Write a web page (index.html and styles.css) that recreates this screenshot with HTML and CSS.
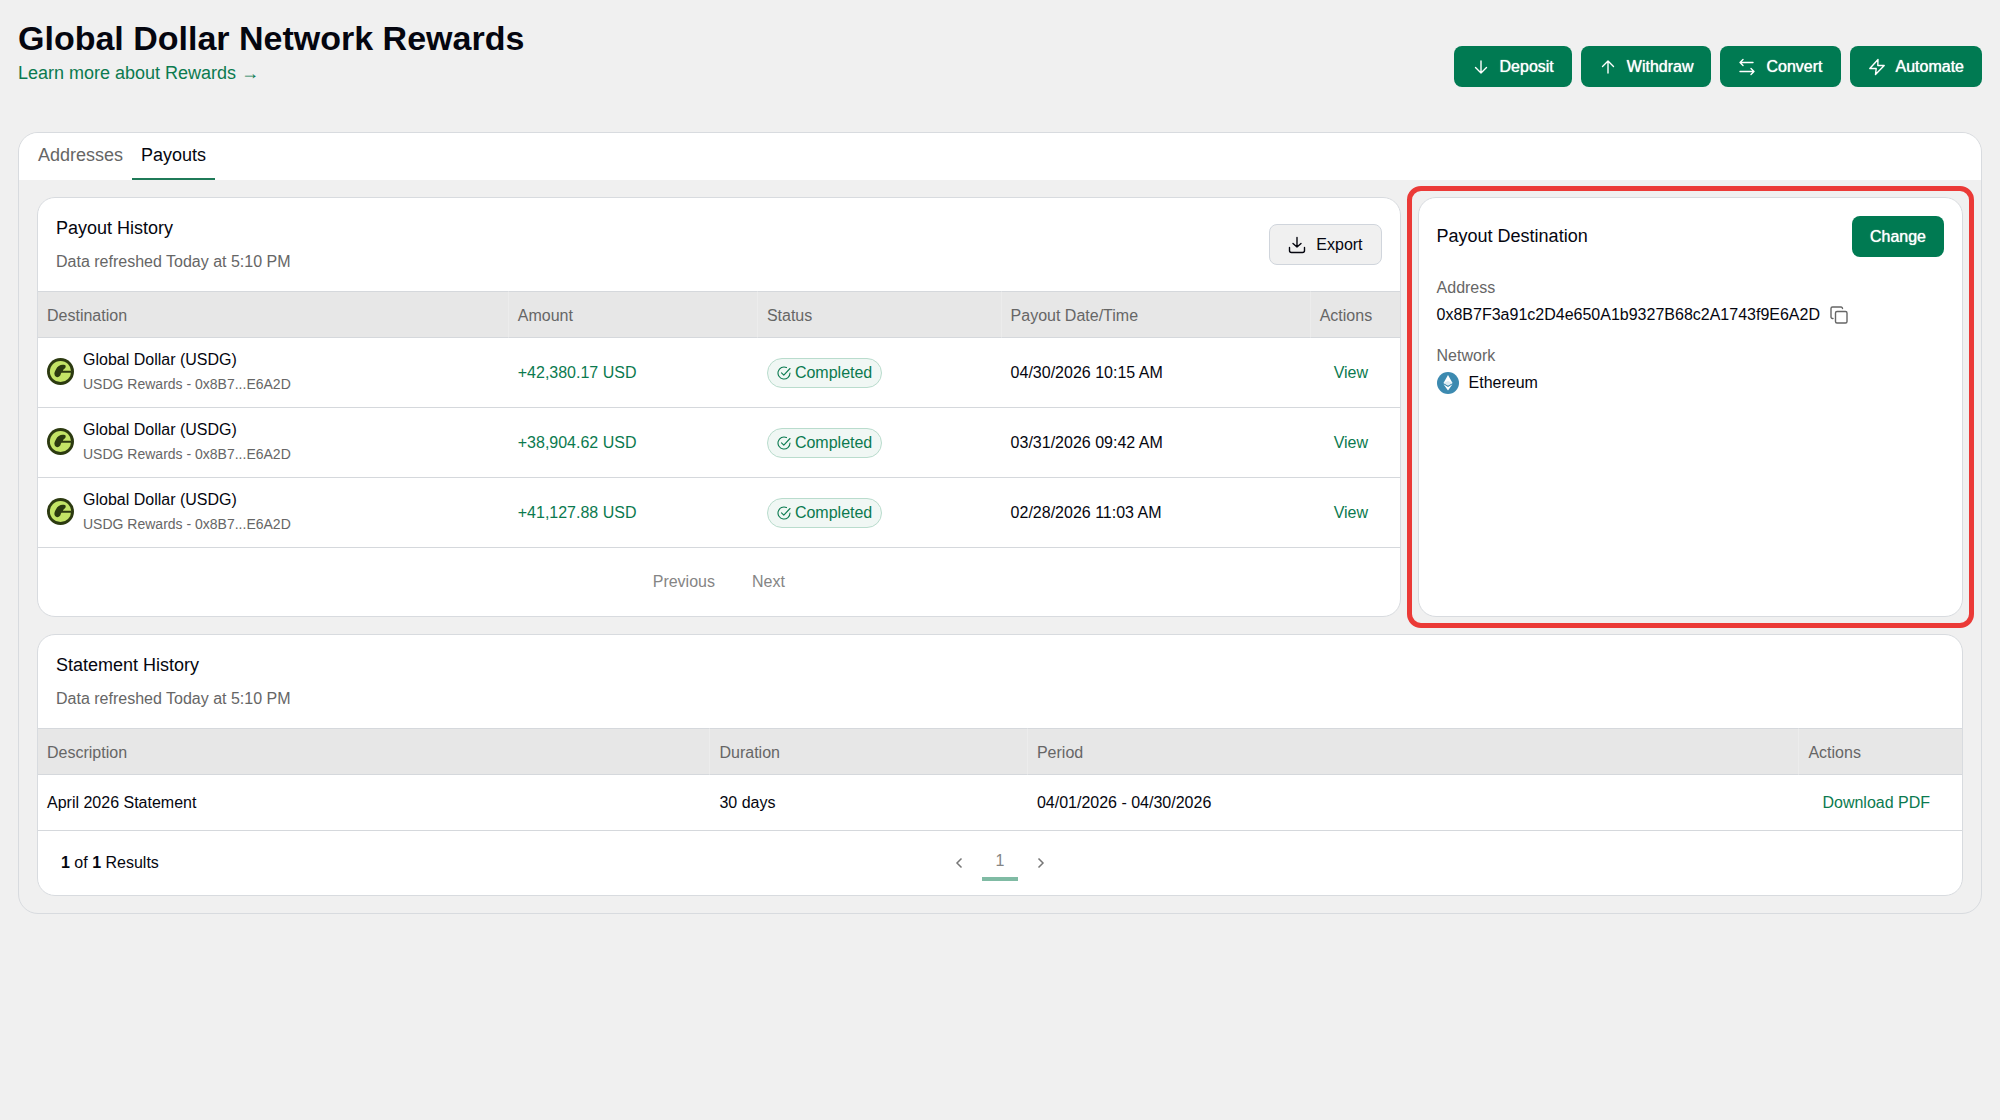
FILE: index.html
```html
<!doctype html>
<html lang="en">
  <head>
    <meta charset="UTF-8" />
    <meta name="viewport" content="width=device-width, initial-scale=1.0" />
    <title>Global Dollar Network Rewards</title>
    <link rel="stylesheet" href="styles.css">
  </head>
  <body>
    <!-- shared icons -->
    <svg class="sprite" aria-hidden="true">
      <symbol id="usdg" viewBox="0 0 28 28">
        <circle cx="14" cy="14" r="14" fill="#2c3a10" />
        <circle cx="14" cy="14" r="11" fill="#c3e466" />
        <path
          d="M19 7.5c-4-1.5-8 .5-9.5 4C8.5 13.500 7 15.5 8 18c.8 2.3 4 2.5 5.5.5 1-1.4.5-2.500 1.500-3.300H25v-2H16.500c.2-1.300 1.800-1.800 2.500-3 .5-1 .5-2 0-2.700z"
          fill="#2c3a10"
        />
      </symbol>
      <symbol id="check" viewBox="0 0 14 14">
        <path
          d="M9.500 1.600A6 6 0 1 0 13 7M4.500 6.800l2.300 2.300L13 2.500"
          fill="none"
          stroke="currentColor"
          stroke-width="1.1"
          stroke-linecap="round"
          stroke-linejoin="round"
        />
      </symbol>
    </svg>

    <header class="page-header">
      <div>
        <h1>Global Dollar Network Rewards</h1>
        <a class="learn-more" href="#">Learn more about Rewards →</a>
      </div>
      <div class="actions">
        <button class="btn btn-primary" type="button">
          <svg class="icon" viewBox="0 0 18 18"><path d="M9 3v12M3.500 9.500L9 15l5.500-5.500" /></svg>
          Deposit
        </button>
        <button class="btn btn-primary" type="button">
          <svg class="icon" viewBox="0 0 18 18"><path d="M9 15V3M3.500 8.500L9 3l5.500 5.500" /></svg>
          Withdraw
        </button>
        <button class="btn btn-primary" type="button">
          <svg class="icon" viewBox="0 0 18 18">
            <path d="M15 4.500H2M5 1.500l-3 3 3 3M2 13.500h14M13 10.500l3 3-3 3" />
          </svg>
          Convert
        </button>
        <button class="btn btn-primary" type="button">
          <svg class="icon" viewBox="0 0 18 18">
            <path d="M10 1.500L1.800 10.500h6.400L7.500 16.500 16.200 7.500H9.800z" />
          </svg>
          Automate
        </button>
      </div>
    </header>

    <main class="panel">
      <nav class="tabs">
        <a class="tab" href="#">Addresses</a>
        <a class="tab active" href="#">Payouts</a>
      </nav>

      <div class="content">
        <section class="card">
          <div class="card-header">
            <div>
              <h2>Payout History</h2>
              <p class="refreshed">Data refreshed Today at 5:10 PM</p>
            </div>
            <button class="btn btn-secondary" type="button">
              <svg class="icon" viewBox="0 0 18 18">
                <path d="M9 1.500v9.500M5 7.500L9 11l4-3.500M1.500 11.500v3a2 2 0 0 0 2 2h11a2 2 0 0 0 2-2v-3" />
              </svg>
              Export
            </button>
          </div>
          <table class="payouts">
            <thead>
              <tr>
                <th class="col-destination">Destination</th>
                <th class="col-amount">Amount</th>
                <th class="col-status">Status</th>
                <th class="col-date">Payout Date/Time</th>
                <th class="col-view">Actions</th>
              </tr>
            </thead>
            <tbody>
              <tr>
                <td>
                  <div class="asset">
                    <svg class="coin"><use href="#usdg" /></svg>
                    <div>
                      <div class="asset-name">Global Dollar (USDG)</div>
                      <div class="asset-source">USDG Rewards - 0x8B7...E6A2D</div>
                    </div>
                  </div>
                </td>
                <td class="amount">+42,380.17 USD</td>
                <td>
                  <span class="badge"><svg class="check"><use href="#check" /></svg>Completed</span>
                </td>
                <td>04/30/2026 10:15 AM</td>
                <td><a class="row-link" href="#">View</a></td>
              </tr>
              <tr>
                <td>
                  <div class="asset">
                    <svg class="coin"><use href="#usdg" /></svg>
                    <div>
                      <div class="asset-name">Global Dollar (USDG)</div>
                      <div class="asset-source">USDG Rewards - 0x8B7...E6A2D</div>
                    </div>
                  </div>
                </td>
                <td class="amount">+38,904.62 USD</td>
                <td>
                  <span class="badge"><svg class="check"><use href="#check" /></svg>Completed</span>
                </td>
                <td>03/31/2026 09:42 AM</td>
                <td><a class="row-link" href="#">View</a></td>
              </tr>
              <tr>
                <td>
                  <div class="asset">
                    <svg class="coin"><use href="#usdg" /></svg>
                    <div>
                      <div class="asset-name">Global Dollar (USDG)</div>
                      <div class="asset-source">USDG Rewards - 0x8B7...E6A2D</div>
                    </div>
                  </div>
                </td>
                <td class="amount">+41,127.88 USD</td>
                <td>
                  <span class="badge"><svg class="check"><use href="#check" /></svg>Completed</span>
                </td>
                <td>02/28/2026 11:03 AM</td>
                <td><a class="row-link" href="#">View</a></td>
              </tr>
            </tbody>
          </table>
          <div class="prev-next">
            <button class="text-btn" type="button">Previous</button>
            <button class="text-btn" type="button">Next</button>
          </div>
        </section>

        <section class="card destination">
          <div class="destination-header">
            <h2>Payout Destination</h2>
            <button class="btn btn-primary" type="button">Change</button>
          </div>
          <dl class="details">
            <dt>Address</dt>
            <dd>
              0x8B7F3a91c2D4e650A1b9327B68c2A1743f9E6A2D
              <button class="copy" type="button" aria-label="Copy address">
                <svg class="icon" viewBox="0 0 18 18">
                  <rect x="5.500" y="5.500" width="11.500" height="11.500" rx="1.500" />
                  <path d="M3 12.500h-.5A1.500 1.500 0 0 1 1 11V2.500A1.500 1.500 0 0 1 2.500 1H11a1.500 1.500 0 0 1 1.500 1.500" />
                </svg>
              </button>
            </dd>
            <dt>Network</dt>
            <dd>
              <svg class="network" viewBox="0 0 22 22">
                <circle cx="11" cy="11" r="11" fill="#3c8ab0" />
                <path d="M11 3l4.500 8-4.500 2.600L6.500 11z" fill="#fff" />
                <path d="M6.500 12.300l4.500 2.600 4.500-2.600L11 18.500z" fill="#fff" />
                <path d="M11 9l4.500 2-4.500 2.600L6.500 11z" fill="#dcebf2" />
              </svg>
              Ethereum
            </dd>
          </dl>
        </section>

        <section class="card statements">
          <div class="card-header">
            <div>
              <h2>Statement History</h2>
              <p class="refreshed">Data refreshed Today at 5:10 PM</p>
            </div>
          </div>
          <table>
            <thead>
              <tr>
                <th class="col-description">Description</th>
                <th class="col-duration">Duration</th>
                <th class="col-period">Period</th>
                <th class="col-download">Actions</th>
              </tr>
            </thead>
            <tbody>
              <tr>
                <td>April 2026 Statement</td>
                <td>30 days</td>
                <td>04/01/2026 - 04/30/2026</td>
                <td><a class="row-link" href="#">Download PDF</a></td>
              </tr>
            </tbody>
          </table>
          <div class="card-footer">
            <div class="results"><b>1</b> of <b>1</b> Results</div>
            <div class="pager">
              <button class="pager-arrow" type="button" aria-label="Previous page">
                <svg viewBox="0 0 18 18"><path d="M11.500 4.500L7 9l4.500 4.500" /></svg>
              </button>
              <button class="pager-page" type="button">1</button>
              <button class="pager-arrow" type="button" aria-label="Next page">
                <svg viewBox="0 0 18 18"><path d="M6.500 4.500L11 9l-4.500 4.500" /></svg>
              </button>
            </div>
          </div>
        </section>
      </div>
    </main>
  </body>
</html>
```
FILE: styles.css
```css
* {
  box-sizing: border-box;
}
body {
  margin: 0;
  padding: 18px;
  background-color: #f0f0f0;
  color: #05060f;
  font-family: 'Liberation Sans', Arial, Helvetica, sans-serif;
  font-size: 16px;
  line-height: 24px;
}
h1,
h2,
p,
dl,
dd {
  margin: 0;
}
h1 {
  font-size: 34px;
  line-height: 41px;
}
h2 {
  font-size: 18px;
  font-weight: normal;
  line-height: 27px;
}
a {
  color: #0b7a4f;
  text-decoration: none;
}
button {
  font: inherit;
  cursor: pointer;
}
.sprite {
  display: none;
}

/* header */
.page-header {
  display: flex;
  justify-content: space-between;
  align-items: flex-end;
  margin-bottom: 45px;
}
.learn-more {
  display: block;
  font-size: 18px;
  line-height: 28px;
}
.actions {
  display: flex;
  gap: 9px;
}
.btn {
  display: inline-flex;
  align-items: center;
  gap: 10px;
  height: 41px;
  padding: 0 18px;
  border: 0;
  border-radius: 8px;
}
.btn-primary {
  background-color: #007a52;
  color: #fff;
  text-shadow: 0 0 1px #fff;
}
.btn-secondary {
  border: 1px solid #d0d5dc;
  background-color: #f0f0f0;
  color: #05060f;
}
.icon {
  width: 18px;
  height: 18px;
  fill: none;
  stroke: currentColor;
  stroke-width: 1.4;
  stroke-linecap: round;
  stroke-linejoin: round;
}

/* panel and tabs */
.panel {
  border: 1px solid #d8dbdf;
  border-radius: 20px;
  overflow: hidden;
}
.tabs {
  display: flex;
  padding: 0 10px;
  background-color: #fff;
}
.tab {
  height: 47px;
  padding: 9px 9px 0;
  border-bottom: 2px solid transparent;
  color: #666;
  font-size: 18px;
  line-height: 27px;
}
.tab.active {
  border-color: #1f7a58;
  color: #05060f;
}
.content {
  display: grid;
  grid-template-columns: 5fr 2fr;
  gap: 17px;
  padding: 17px 18px;
}

/* cards */
.card {
  border: 1px solid #d8dbdf;
  border-radius: 18px;
  background-color: #fff;
}
.statements {
  grid-column: 1 / -1;
}
.card-header {
  display: flex;
  justify-content: space-between;
  align-items: center;
  padding: 17px 18px;
}
.refreshed {
  margin-top: 8px;
  color: #666;
}

/* tables */
table {
  width: 100%;
  border-spacing: 0;
  table-layout: fixed;
}
th,
td {
  padding: 0 9px;
  border-bottom: 1px solid #d5d8dc;
  text-align: left;
}
th {
  height: 47px;
  padding-top: 2px;
  border-top: 1px solid #d5d8dc;
  background-color: #e7e7e7;
  color: #666;
  font-weight: normal;
}
th + th {
  border-left: 1px solid #ececec;
}
td {
  height: 56px;
}
td + td {
  padding-left: 10px;
}
.payouts td {
  height: 70px;
}
.col-destination {
  width: 34.5%;
}
.col-amount {
  width: 18.3%;
}
.col-status {
  width: 17.9%;
}
.col-date {
  width: 22.7%;
}
.col-view {
  width: 6.6%;
}
.col-description {
  width: 34.9%;
}
.col-duration {
  width: 16.5%;
}
.col-period {
  width: 40.1%;
}
.col-download {
  width: 8.5%;
}
.asset {
  display: flex;
  align-items: center;
  gap: 9px;
  padding-bottom: 2px;
}
.coin {
  width: 27px;
  height: 27px;
}
.asset-source {
  color: #666;
  font-size: 14px;
}
.amount {
  color: #0b7a4f;
}
.badge {
  display: inline-flex;
  align-items: center;
  gap: 4px;
  height: 30px;
  padding: 0 9px;
  border: 1px solid #b9dccd;
  border-radius: 15px;
  background-color: #f0f7f4;
  color: #0b7a4f;
  vertical-align: middle;
}
.check {
  width: 14px;
  height: 14px;
}
.row-link {
  padding-left: 14px;
  white-space: nowrap;
}
.prev-next {
  display: flex;
  justify-content: center;
  align-items: center;
  gap: 37px;
  height: 68px;
}
.text-btn {
  padding: 0;
  border: 0;
  background: none;
  color: #858585;
}

/* payout destination */
.destination {
  position: relative;
  padding: 18px;
}
.destination::after {
  content: '';
  position: absolute;
  inset: -12px;
  border: 5px solid #eb3a37;
  border-radius: 14px;
  pointer-events: none;
}
.destination-header {
  display: flex;
  justify-content: space-between;
  align-items: center;
  margin-bottom: 17px;
}
.details {
  line-height: 27px;
}
.details dt {
  color: #666;
}
.details dd {
  display: flex;
  align-items: center;
  gap: 10px;
  margin-bottom: 14px;
}
.copy {
  display: flex;
  padding: 0;
  border: 0;
  background: none;
  color: #666;
}
.network {
  width: 22px;
  height: 22px;
}

/* statement footer */
.card-footer {
  display: grid;
  grid-template-columns: 1fr auto 1fr;
  align-items: center;
  height: 64px;
  padding: 0 23px;
}
.pager {
  display: flex;
  align-items: center;
  gap: 14px;
}
.pager-arrow {
  display: flex;
  width: 18px;
  padding: 0;
  border: 0;
  background: none;
}
.pager-arrow svg {
  width: 18px;
  height: 18px;
  fill: none;
  stroke: #777;
  stroke-width: 1.5;
}
.pager-page {
  width: 36px;
  height: 36px;
  padding: 0;
  border: 0;
  border-bottom: 4px solid #80bba4;
  background: none;
  color: #858585;
}
```
